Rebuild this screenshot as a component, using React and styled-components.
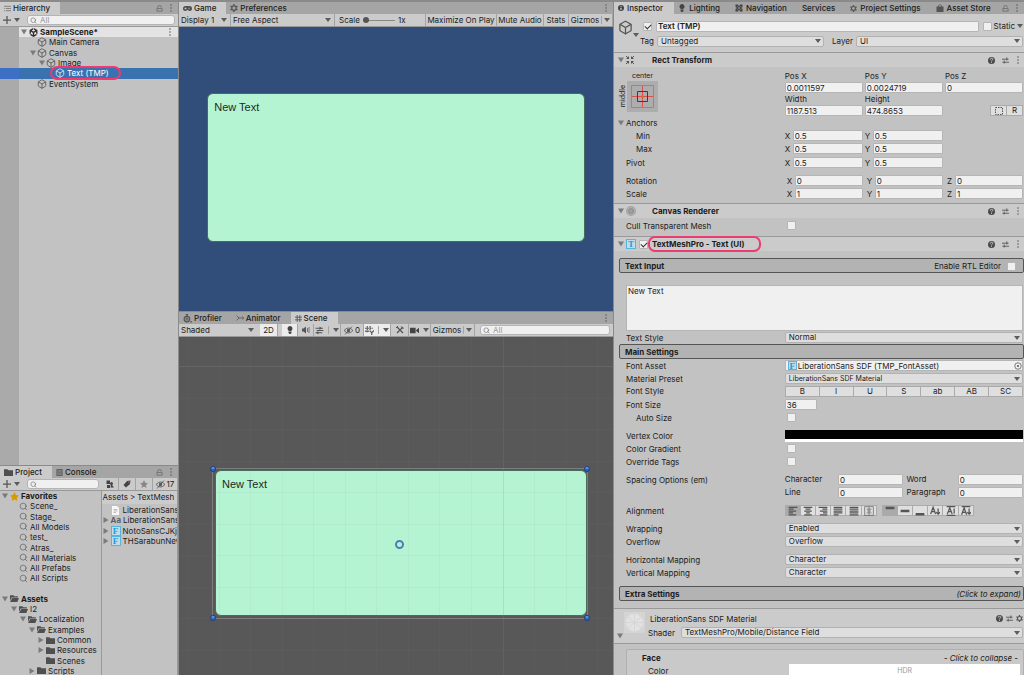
import React from 'react';
import styled, { createGlobalStyle, css } from 'styled-components';
import { Box, Search } from 'lucide-react';
import { FaUnity } from 'react-icons/fa6';

const GlobalStyle = createGlobalStyle`
  * {
    box-sizing: border-box;
  }
  body {
    margin: 0;
    overflow: hidden;
    background: #8a8a8a;
    color: #1c1c1c;
    font: 8px/10px Inter, "Liberation Sans", sans-serif;
  }
  button, input, select, textarea {
    margin: 0;
    padding: 0;
    border: 0;
    background: none;
    color: inherit;
    font: inherit;
  }
  svg {
    display: block;
    flex: none;
  }
`;

/* ---------- icons ---------- */

const Svg = ({ w = 8, h = w, box = '0 0 16 16', children }) => (
  <svg width={w} height={h} viewBox={box} fill="none" stroke="#555" strokeWidth="2" aria-hidden="true">
    {children}
  </svg>
);

const Down = () => (
  <Svg w={6} h={4} box="0 0 6 4"><path d="M0 0h6L3 4z" fill="#5c5c5c" stroke="none" /></Svg>
);
const Fold = ({ open }) => (
  <Svg w={6} box="0 0 12 12">
    <path d={open ? 'M0 1h12L6 11z' : 'M1 0v12l10-6z'} fill="#7b7b7b" stroke="none" />
  </Svg>
);
const Dots = () => (
  <Svg w={4} h={8} box="0 0 8 16">
    <g fill="#555" stroke="none">
      <circle cx="4" cy="2" r="1.500" />
      <circle cx="4" cy="8" r="1.500" />
      <circle cx="4" cy="14" r="1.500" />
    </g>
  </Svg>
);
const LockIcon = () => (
  <Svg w={7}><path d="M4 8V5a4 4 0 0 1 8 0v1M2 8h12v6H2z" stroke="#707070" /></Svg>
);
const Plus = () => <Svg w={8}><path d="M8 0v16M0 8h16" strokeWidth="2.500" /></Svg>;
const Cube = ({ size = 10, color = '#555' }) => <Box size={size} color={color} strokeWidth={2} />;
const Lens = ({ size = 9 }) => <Search size={size} color="#666" strokeWidth={2} />;
const ListIcon = () => (
  <Svg w={7}><path d="M0 3h16M4 8h12M4 13h12M1 7v2M1 12v2" stroke="#777" /></Svg>
);
const GamepadIcon = () => (
  <Svg w={9} h={7} box="0 0 18 14">
    <path d="M5 2h8a5 5 0 0 1 0 10q-2 0-3-2H8q-1 2-3 2A5 5 0 0 1 5 2z" fill="#505050" stroke="none" />
    <path d="M5 5v4M3 7h4M12 5.500v3" stroke="#cbcbcb" strokeWidth="1.500" />
  </Svg>
);
const Gear = ({ size = 8 }) => (
  <Svg w={size}>
    <circle cx="8" cy="8" r="4.500" strokeWidth="2.500" />
    <path d="M8 0v3M8 13v3M1 4l3 2M12 10l3 2M1 12l3-2M12 6l3-2" strokeWidth="3" />
  </Svg>
);
const InfoIcon = () => (
  <Svg w={6}>
    <circle cx="8" cy="8" r="8" fill="#444" stroke="none" />
    <path d="M8 7v6M8 3v2" stroke="#ddd" strokeWidth="3" />
  </Svg>
);
const Bulb = () => (
  <Svg w={8}>
    <path d="M8 0a5 5 0 0 1 3 9v2H5V9a5 5 0 0 1 3-9zM5 12h6v2l-2 2H7l-2-2z" fill="#444" stroke="none" />
  </Svg>
);
const NavIcon = () => (
  <Svg w={8}>
    <path d="M1 1h5l2 4 2-4h5v5l-3 2 3 2v5h-5l-2-4-2 4H1v-5l3-2-3-2z" fill="#444" stroke="none" />
    <path d="M4 4l8 8M12 4l-8 8" stroke="#a5a5a5" strokeWidth="1" />
  </Svg>
);
const BagIcon = () => (
  <Svg w={8}>
    <path d="M1 5h14v11H1z" fill="#555" stroke="none" />
    <path d="M5 7V3q3-3 6 0v4" strokeWidth="1.500" />
  </Svg>
);
const ProfilerIcon = () => (
  <Svg w={9}>
    <circle cx="7" cy="9" r="5" fill="#888" />
    <path d="M5 1h4M7 1v3M7 6v4M13 14h3" />
  </Svg>
);
const AnimatorIcon = () => (
  <Svg w={8}><path d="M1 3l5 5-5 5M6 8h10M13 5l2 3-2 3" stroke="#666" /></Svg>
);
const HashIcon = () => (
  <Svg w={7}><path d="M5 0v16M11 0v16M0 5h16M0 11h16" /></Svg>
);
const Speaker = () => (
  <Svg w={8}>
    <path d="M0 5h3l5-4v14l-5-4H0z" fill="#555" stroke="none" />
    <path d="M11 4v8M14 2v12" stroke="#777" />
  </Svg>
);
const FxIcon = () => (
  <Svg w={9}>
    <path d="M1 4h13M3 8h12M1 12h12" />
    <path d="M8 1l4 3-4 3zM6 9l-4 3 4 3z" fill="#555" stroke="none" />
  </Svg>
);
const EyeOff = () => (
  <Svg w={9}><path d="M0 8q8-9 16 0-8 9-16 0zM2 15L14 1" strokeWidth="1.500" /><circle cx="8" cy="8" r="2" /></Svg>
);
const GridSnap = () => (
  <Svg w={9}>
    <path d="M4 0v12M9 0v9M0 4h14M0 9h9" strokeDasharray="3 1" />
    <path d="M9 9l3 3 4-4M12 12v4" />
  </Svg>
);
const ToolsIcon = () => (
  <Svg w={8}><path d="M2 2l12 12M14 2L2 14" strokeWidth="2.500" /><path d="M0 4l4-4M10 1l5 5" /></Svg>
);
const CameraIcon = () => (
  <Svg w={9}><path d="M0 3h10v10H0zM11 7l5-4v10l-5-4z" fill="#444" stroke="none" /></Svg>
);
const FolderIcon = ({ open }) => (
  <Svg w={9}>
    <path
      d={open ? 'M0 2h6l2 2h6v2H3L0 12zM4 7h12l-3 7H0z' : 'M0 2h6l2 2h8v10H0z'}
      fill="#4f4f4f"
      stroke="none"
    />
  </Svg>
);
const StarIcon = ({ size = 9, color = '#d69a00' }) => (
  <Svg w={size}>
    <path d="M8 0l2.500 5.500 5.500.5-4 4 1 6-5-3-5 3 1-6-4-4 5.500-.5z" fill={color} stroke="none" />
  </Svg>
);
const ConsoleIcon = () => (
  <Svg w={7}><path d="M2 1h12v14H2z" fill="#888" /><path d="M4 5h8M4 8h8M4 11h8" strokeWidth="1" /></Svg>
);
const ShapesIcon = () => (
  <Svg w={8}>
    <path d="M1 1h7v7H1zM2 10h6v6H2zM10 7l6 8H9z" fill="#444" stroke="none" />
    <circle cx="11" cy="7" r="3" fill="#444" stroke="none" />
  </Svg>
);
const TagIcon = () => (
  <Svg w={8}><path d="M8 2l7-1-1 7-8 7-5-5z" fill="#444" stroke="none" /><circle cx="12" cy="4" r="1" fill="#ccc" stroke="none" /></Svg>
);
const PageIcon = () => (
  <Svg w={9} box="0 0 18 18">
    <path d="M2 0h10l4 4v14H2z" fill="#f8f8f8" stroke="none" />
    <path d="M5 7h8M5 10h8M5 13h5" stroke="#aaa" strokeWidth="1.500" />
  </Svg>
);
const HelpIcon = () => (
  <Svg w={7}>
    <circle cx="8" cy="8" r="8" fill="#4a4a4a" stroke="none" />
    <path d="M5 6q0-3 3-3t3 2.500Q11 7 8 8.500V10M8 11.500v2" stroke="#d0d0d0" />
  </Svg>
);
const PresetIcon = () => (
  <Svg w={7}><path d="M0 5h15M11 1v7M1 12h15M5 8v7" /></Svg>
);
const RectIcon = () => (
  <Svg w={8}>
    <path d="M0 0l5 5M16 0l-5 5M0 16l5-5M16 16l-5-5" />
    <path d="M0 6h6V0zM16 6h-6V0zM0 10h6v6zM16 10h-6v6z" fill="#555" stroke="none" />
  </Svg>
);
const RendererIcon = () => (
  <Svg w={10}>
    <circle cx="8" cy="8" r="7" fill="#b4b4b4" stroke="#a4a4a4" />
    <circle cx="8" cy="8" r="3.500" stroke="#8a8a8a" />
    <circle cx="8" cy="8" r="1" fill="#777" stroke="none" />
  </Svg>
);
const AnchorDrawing = () => (
  <Svg w={31} box="0 0 31 31">
    <path d="M0 0h31v31H0z" fill="#adadad" stroke="none" />
    <path d="M4.500 4.500h22v22h-22z" stroke="#8c8c8c" strokeWidth="1" />
    <path d="M15.500 5v21M5 15.500h21" stroke="#d95050" strokeWidth="1" />
    <path d="M10.500 10.500h10v10h-10z" stroke="#3c3c3c" strokeWidth="1" />
    <circle cx="15.500" cy="15.500" r="1.500" fill="#c07818" stroke="none" />
  </Svg>
);
const DottedBox = () => (
  <Svg w={8}><path d="M1 1h14v14H1z" strokeDasharray="3 2" /></Svg>
);
const PickerIcon = () => (
  <Svg w={8}><circle cx="8" cy="8" r="6.500" strokeWidth="1.500" /><circle cx="8" cy="8" r="2" fill="#555" stroke="none" /></Svg>
);
const SphereIcon = () => (
  <Svg w={21} box="0 0 21 21">
    <path d="M0 0h21v21H0z" fill="#d4d4d4" stroke="none" />
    <circle cx="10.500" cy="10.500" r="9" fill="#e2e2e2" stroke="#dadada" strokeWidth="1" />
    <path d="M4 5l13 11M4 16L17 5M10.500 1v19M1 10.500h19" stroke="#d6d6d6" strokeWidth="1" />
  </Svg>
);

const ALIGN_PATHS = {
  left: 'M1 2h14M1 5h8M1 8h12M1 11h7M1 14h12',
  center: 'M1 2h14M4 5h8M2 8h12M5 11h6M2 14h12',
  right: 'M1 2h14M7 5h8M3 8h12M8 11h7M3 14h12',
  justified: 'M1 2h14M1 5h14M1 8h14M1 11h14M1 14h8',
  flush: 'M1 2h14M1 5h14M1 8h14M1 11h14M1 14h14',
  geometry: 'M1 1h14v14H1zM8 1v14M4 5h8M5 8h6M4 11h8',
  top: 'M1 2h14M1 4h14',
  middle: 'M1 7h14M1 9h14',
  bottom: 'M1 12h14M1 14h14',
  baseline: 'M1 13L5 2l4 11M3 9h5M13 4v9M10 10l3 3 3-3',
  midline: 'M1 1h14M2 13L6 3l4 10M3 9h6M13 4v8M1 15h14',
  capline: 'M1 1h14M1 14L5 3l4 11M3 10h5M13 4v9M10 10l3 3 3-3',
};
const AlignIcon = ({ name }) => (
  <Svg w={10}><path d={ALIGN_PATHS[name]} strokeWidth={name === 'geometry' ? 1 : 2} /></Svg>
);

/* ---------- shared parts ---------- */

const Shell = styled.div`
  display: grid;
  grid-template-columns: 178fr 434fr 410fr;
  gap: 1px;
  height: 100vh;
  padding-top: 2px;
`;
const Column = styled.div`
  display: grid;
  grid-template-rows: ${props => props.$rows};
  gap: 1px;
  min-width: 0;
  min-height: 0;
`;
const Panel = styled.section`
  display: flex;
  flex-direction: column;
  min-width: 0;
  min-height: 0;
  overflow: hidden;
  background: #c2c2c2;
`;
const TabBar = styled.div`
  display: flex;
  flex: none;
  height: 12px;
  padding-right: 5px;
  background: #a5a5a5;
`;
const Tab = styled.button`
  display: flex;
  align-items: center;
  gap: ${props => (props.$roomy ? 3 : 2)}px;
  padding: 0 ${props => (props.$roomy ? 11 : 10)}px 0 4px;
  white-space: nowrap;
  font-weight: 500;
  background: ${props => (props.$active ? '#cbcbcb' : 'transparent')};
  box-shadow: ${props => (props.$focused ? '0 -2px 0 #4a80c4' : 'none')};
`;
const TabTools = styled.div`
  display: flex;
  align-items: center;
  gap: 6px;
  margin-left: auto;
`;
const Toolbar = styled.div`
  display: flex;
  align-items: center;
  flex: none;
  height: 13px;
  background: #cbcbcb;
  border-bottom: 1px solid #999;
`;
const ToolItem = styled.button`
  display: flex;
  align-items: center;
  justify-content: ${props => (props.$spread ? 'space-between' : 'center')};
  gap: 2px;
  flex: ${props => (props.$width ? `0 0 ${props.$width}px` : 'none')};
  height: 12px;
  padding: 0 1px;
  white-space: nowrap;
  border-right: 1px solid #a3a3a3;
  background: ${props => (props.$on ? '#ececec' : 'transparent')};
`;
const LoneItem = styled(ToolItem)`
  margin: 0 4px 0 3px;
`;
const Split = styled.span`
  width: 1px;
  height: 8px;
  background: #a3a3a3;
`;
const AddButton = styled.button`
  display: flex;
  align-items: center;
  gap: 3px;
  width: 27px;
  padding-left: 3px;
`;
const SearchBox = styled.label`
  display: flex;
  align-items: center;
  flex: 1;
  gap: 3px;
  min-width: 0;
  height: 10px;
  margin-right: 3px;
  padding-left: 2px;
  border: 1px solid #b4b4b4;
  border-radius: 3px;
  background: #f0f0f0;

  input {
    width: 100%;
    min-width: 0;
    height: 8px;
    line-height: 8px;
    outline: 0;
  }
  input::placeholder {
    color: #9a9a9a;
  }
`;
const Marker = styled.span`
  position: absolute;
  inset: ${props => props.$inset};
  border: 2px solid #ee3a70;
  border-radius: 7px;
  pointer-events: none;
`;

const Filter = ({ label, placeholder }) => (
  <SearchBox>
    <Lens size={7} />
    <input aria-label={label} placeholder={placeholder} />
  </SearchBox>
);

const Tabs = ({ items, lock, roomy }) => (
  <TabBar role="tablist">
    {items.map(({ label, icon, active, focused }) => (
      <Tab key={label} role="tab" aria-selected={!!active} $active={active} $focused={focused} $roomy={roomy}>
        {icon}
        {label}
      </Tab>
    ))}
    <TabTools>
      {lock && <LockIcon />}
      <Dots />
    </TabTools>
  </TabBar>
);

/* ---------- trees ---------- */

const Tree = styled.ul`
  display: grid;
  grid-auto-rows: 1fr;
  flex: none;
  height: ${props => props.$height}px;
  margin: 0;
  padding: 0;
  list-style: none;
`;
const TreeItem = styled.li`
  position: relative;
  display: flex;
  align-items: center;
  min-width: 0;
  padding-left: ${props => props.$depth * 9}px;
  white-space: nowrap;
  font-weight: ${props => (props.$bold ? 700 : 400)};
`;
const FoldSlot = styled.span`
  display: flex;
  justify-content: center;
  flex: 0 0 9px;
`;
const IconSlot = styled.span`
  display: flex;
  justify-content: center;
  flex: 0 0 10px;
  margin-right: 2px;
`;
const AssetBadge = styled.span`
  flex: none;
  width: ${props => props.$size || 10}px;
  height: ${props => props.$size || 10}px;
  border: 1px solid #58b4dc;
  background: #c4dce8;
  color: #1c9cd8;
  font: bold 9px/8px "Liberation Serif", serif;
  text-align: center;
`;
const FontMark = styled.span`
  color: #555;
  font-weight: 600;
`;

const Node = ({ depth = 0, fold, icon, label, bold, children }) => (
  <TreeItem $depth={depth} $bold={bold}>
    <FoldSlot>{fold && <Fold open={fold === 'open'} />}</FoldSlot>
    <IconSlot>{icon}</IconSlot>
    {label}
    {children}
  </TreeItem>
);

const HierarchyBody = styled.div`
  flex: 1;
  background: linear-gradient(to right, #aaa 19px, #c2c2c2 19px);
`;
const HierarchyRow = styled.div`
  display: flex;
  align-items: center;
  color: ${props => (props.$selected ? '#fff' : 'inherit')};
  background: ${props => {
    if (props.$selected) return 'linear-gradient(to right, #3d70c4 19px, #3a72b0 19px)';
    if (props.$scene) return 'linear-gradient(to right, #aaa 19px, #e3e3e3 19px)';
    return 'none';
  }};

  > ${TreeItem} {
    flex: 1;
    margin-left: 19px;
    padding-right: 6px;
  }
`;
const Push = styled.span`
  margin-left: auto;
`;

const HIERARCHY = [
  { label: 'SampleScene*', depth: 0, fold: 'open', scene: true },
  { label: 'Main Camera', depth: 1 },
  { label: 'Canvas', depth: 1, fold: 'open' },
  { label: 'Image', depth: 2, fold: 'open' },
  { label: 'Text (TMP)', depth: 3, selected: true },
  { label: 'EventSystem', depth: 1 },
];

const Hierarchy = () => (
  <Panel>
    <Tabs items={[{ label: 'Hierarchy', icon: <ListIcon />, active: true, focused: true }]} lock />
    <Toolbar>
      <AddButton aria-label="Create"><Plus /><Down /></AddButton>
      <Filter label="Search hierarchy" placeholder="All" />
    </Toolbar>
    <HierarchyBody>
      <Tree as="div" $height={62}>
        {HIERARCHY.map(({ label, depth, fold, scene, selected }) => (
          <HierarchyRow key={label} $scene={scene} $selected={selected}>
            <TreeItem as="div" $depth={depth} $bold={scene}>
              <FoldSlot>{fold && <Fold open />}</FoldSlot>
              <IconSlot>
                {scene ? <FaUnity size={9} color="#333" /> : <Cube color={selected ? '#dfe8f2' : '#555'} />}
              </IconSlot>
              {label}
              {scene && <Push><Dots /></Push>}
              {selected && <Marker $inset="-2px 57px -2px 31px" />}
            </TreeItem>
          </HierarchyRow>
        ))}
      </Tree>
    </HierarchyBody>
  </Panel>
);

/* ---------- project ---------- */

const ProjectBody = styled.div`
  display: grid;
  grid-template-columns: 101fr 76fr;
  flex: 1;
  min-height: 0;
`;
const ProjectPane = styled.div`
  min-width: 0;
  overflow: hidden;
  border-right: 1px solid #999;
`;
const Breadcrumb = styled.nav`
  display: flex;
  gap: 2px;
  height: 13px;
  margin-bottom: 1px;
  padding: 0 1px;
  line-height: 13px;
  background: #cbcbcb;
`;

const FAVORITES = ['Scene_', 'Stage_', 'All Models', 'test_', 'Atras_', 'All Materials', 'All Prefabs', 'All Scripts'];
const FOLDERS = [
  { label: 'Assets', depth: 0, fold: 'open', bold: true },
  { label: 'I2', depth: 1, fold: 'open' },
  { label: 'Localization', depth: 2, fold: 'open' },
  { label: 'Examples', depth: 3, fold: 'open' },
  { label: 'Common', depth: 4, fold: 'closed' },
  { label: 'Resources', depth: 4, fold: 'closed' },
  { label: 'Scenes', depth: 4 },
  { label: 'Scripts', depth: 3, fold: 'closed' },
];

const Project = () => (
  <Panel>
    <Tabs
      items={[
        { label: 'Project', icon: <FolderIcon />, active: true },
        { label: 'Console', icon: <ConsoleIcon /> },
      ]}
      lock
    />
    <Toolbar>
      <AddButton aria-label="Create asset"><Plus /><Down /></AddButton>
      <Filter label="Search project" />
      <ToolItem $width={17} aria-label="Search by type"><ShapesIcon /></ToolItem>
      <ToolItem $width={17} aria-label="Search by label"><TagIcon /></ToolItem>
      <ToolItem $width={17} aria-label="Save search"><StarIcon size={8} color="#888" /></ToolItem>
      <ToolItem $width={25}><EyeOff />17</ToolItem>
    </Toolbar>
    <ProjectBody>
      <ProjectPane>
        <Tree $height={185}>
          <Node fold="open" icon={<StarIcon />} label="Favorites" bold />
          {FAVORITES.map(name => (
            <Node key={name} depth={1} icon={<Lens />} label={name} />
          ))}
          <Node />
          {FOLDERS.map(({ label, depth, fold, bold }) => (
            <Node
              key={label}
              depth={depth}
              fold={fold}
              bold={bold}
              label={label}
              icon={<FolderIcon open={fold === 'open'} />}
            />
          ))}
        </Tree>
      </ProjectPane>
      <ProjectPane>
        <Breadcrumb><span>Assets</span><span>&gt;</span><span>TextMesh</span></Breadcrumb>
        <Tree $height={41}>
          <Node icon={<PageIcon />} label="LiberationSans" />
          <Node fold="closed" icon={<FontMark>Aa</FontMark>} label="LiberationSans" />
          <Node fold="closed" icon={<AssetBadge>F</AssetBadge>} label="NotoSansCJKjp" />
          <Node fold="closed" icon={<AssetBadge>F</AssetBadge>} label="THSarabunNew" />
        </Tree>
      </ProjectPane>
    </ProjectBody>
  </Panel>
);

/* ---------- form controls ---------- */

const SelectWrap = styled.span`
  display: grid;
  align-items: center;
  flex: ${props => props.$flex || 1};
  min-width: 0;

  > * {
    grid-area: 1 / 1;
  }
  > svg {
    justify-self: end;
    margin-right: 3px;
    pointer-events: none;
  }
`;
const SelectBox = styled.select`
  width: 100%;
  height: 11px;
  padding-left: ${props => (props.$bare ? 2 : 3)}px;
  appearance: none;
  line-height: 9px;
  font-size: ${props => (props.$small ? 7 : 8)}px;
  ${props =>
    !props.$bare &&
    css`
      border: 1px solid #b2b2b2;
      border-radius: 2px;
      background: #dedede;
    `}
`;
const TextField = styled.input`
  flex: 1;
  width: 100%;
  min-width: 0;
  height: 11px;
  padding-left: 1px;
  border: 1px solid #b5b5b5;
  border-radius: 1px;
  background: #f0f0f0;
  line-height: 9px;
  font-weight: ${props => (props.$bold ? 600 : 400)};
`;
const Check = styled.input.attrs({ type: 'checkbox' })`
  display: grid;
  place-items: center;
  flex: none;
  width: 9px;
  height: 9px;
  appearance: none;
  border: 1px solid #b5b5b5;
  border-radius: 1px;
  background: #f0f0f0;

  &:checked::after {
    content: '';
    width: 5px;
    height: 3px;
    border: solid #333;
    border-width: 0 0 1px 1px;
    transform: rotate(-45deg);
  }
`;

const Select = ({ value, id, label, flex, bare, small }) => (
  <SelectWrap $flex={flex}>
    <SelectBox id={id} aria-label={label} $bare={bare} $small={small}>
      <option>{value}</option>
    </SelectBox>
    <Down />
  </SelectWrap>
);

/* ---------- game view ---------- */

const GameTools = styled(Toolbar)`
  > ${SelectWrap} {
    height: 12px;
    border-right: 1px solid #a3a3a3;
  }
`;
const Zoom = styled.label`
  display: flex;
  align-items: center;
  gap: 3px;
  flex: 1;
  height: 12px;
  padding-left: 4px;
  border-right: 1px solid #a3a3a3;

  input {
    width: 32px;
    height: 1px;
    appearance: none;
    background: #888;
  }
  input::-webkit-slider-thumb {
    width: 6px;
    height: 6px;
    appearance: none;
    border-radius: 50%;
    background: #555;
  }
`;
const GameCanvas = styled.div`
  display: flex;
  align-items: center;
  justify-content: center;
  flex: 1;
  min-height: 0;
  padding-bottom: 3px;
  background: #314d79;
`;
const card = css`
  border: 1px solid #486b5c;
  border-radius: 6px;
  background: #b5f4d3;
  color: #1b2b23;
  font: 11px/13px "Liberation Sans", Arial, sans-serif;
`;
const GameCard = styled.div`
  ${card}
  width: 87%;
  aspect-ratio: 378 / 149;
  padding: 7px 6px;
`;

const Game = () => (
  <Panel>
    <Tabs
      items={[
        { label: 'Game', icon: <GamepadIcon />, active: true },
        { label: 'Preferences', icon: <Gear /> },
      ]}
    />
    <GameTools>
      <Select label="Display" value="Display 1" bare flex="0 0 52px" />
      <Select label="Aspect" value="Free Aspect" bare flex="0 0 104px" />
      <Zoom>
        Scale
        <input type="range" min="1" max="5" defaultValue="1" />
        1x
      </Zoom>
      <ToolItem $width={71}>Maximize On Play</ToolItem>
      <ToolItem $width={47}>Mute Audio</ToolItem>
      <ToolItem $width={25}>Stats</ToolItem>
      <ToolItem $width={44}>Gizmos<Split /><Down /></ToolItem>
    </GameTools>
    <GameCanvas>
      <GameCard>New Text</GameCard>
    </GameCanvas>
  </Panel>
);

/* ---------- scene view ---------- */

const SceneTools = styled(Toolbar)`
  > ${SearchBox} {
    margin-left: 5px;
  }
`;
const SceneCanvas = styled.div`
  position: relative;
  flex: 1;
  min-height: 0;
  overflow: hidden;
  padding: 131px 25px 0 33px;
  background: #585858;
`;
const GridLines = styled.svg`
  position: absolute;
  inset: 0;
  width: 100%;
  height: 100%;
  pointer-events: none;
`;
const Selection = styled.div`
  position: relative;
  height: 151px;
  padding: 1px 0 2px 2px;
  border: 1px solid #7d7d7d;
`;
const SceneCard = styled.div`
  ${card}
  height: 100%;
  padding: 7px 6px;
`;
const Handle = styled.span`
  position: absolute;
  ${props => props.$v}: -3px;
  ${props => props.$h}: -3px;
  width: 6px;
  height: 6px;
  border: 1px solid #1c3f80;
  border-radius: 50%;
  background: linear-gradient(#86b8f4, #2268dc 60%);
`;
const Pivot = styled.span`
  position: absolute;
  top: 50%;
  left: 50%;
  width: 9px;
  height: 9px;
  margin: -4px -5px;
  border: 2px solid #4680b4;
  border-radius: 50%;
  background: #c4ecdc;
`;

const SceneGrid = () => (
  <GridLines aria-hidden="true">
    {Array.from({ length: 30 }, (_, i) => (
      <React.Fragment key={i}>
        <path d={`M${8.5 + Math.round(i * 31.55)} 0v2000`} stroke="#888" strokeOpacity={i === 10 ? 0.2 : 0.07} />
        <path d={`M0 ${29.5 + Math.round(i * 31.55)}h2000`} stroke="#888" strokeOpacity={i === 0 ? 0.28 : 0.07} />
      </React.Fragment>
    ))}
  </GridLines>
);

const Scene = () => (
  <Panel>
    <Tabs
      items={[
        { label: 'Profiler', icon: <ProfilerIcon /> },
        { label: 'Animator', icon: <AnimatorIcon /> },
        { label: 'Scene', icon: <HashIcon />, active: true },
      ]}
    />
    <SceneTools>
      <Select label="Shading mode" value="Shaded" bare flex="0 0 78px" />
      <LoneItem $width={18} $on>2D</LoneItem>
      <ToolItem $width={16} $on aria-label="Lighting"><Bulb /></ToolItem>
      <ToolItem $width={16} aria-label="Audio"><Speaker /></ToolItem>
      <ToolItem $width={27} $spread aria-label="Effects"><FxIcon /><Split /><Down /></ToolItem>
      <ToolItem $width={23}><EyeOff />0</ToolItem>
      <ToolItem $width={27} $spread $on aria-label="Grid"><GridSnap /><Split /><Down /></ToolItem>
      <ToolItem $width={18} aria-label="Component tools"><ToolsIcon /></ToolItem>
      <ToolItem $width={22} $spread aria-label="Camera"><CameraIcon /><Down /></ToolItem>
      <ToolItem $width={44}>Gizmos<Split /><Down /></ToolItem>
      <Filter label="Search scene" placeholder="All" />
    </SceneTools>
    <SceneCanvas>
      <Selection>
        <SceneCard>New Text</SceneCard>
        <Handle $v="top" $h="left" />
        <Handle $v="top" $h="right" />
        <Handle $v="bottom" $h="left" />
        <Handle $v="bottom" $h="right" />
        <Pivot />
      </Selection>
      <SceneGrid />
    </SceneCanvas>
  </Panel>
);

/* ---------- inspector ---------- */

const ObjectHeader = styled.header`
  display: grid;
  grid-template-columns: 22px 1fr;
  flex: none;
  height: 38px;
  padding: 6px 1px 0 4px;
  background: #cbcbcb;
`;
const ObjectIcon = styled.span`
  display: flex;
  align-items: flex-end;
  height: 17px;

  > svg:first-child {
    align-self: flex-start;
  }
`;
const ObjectRow = styled.div`
  display: flex;
  align-items: center;
  gap: ${props => props.$gap || 3}px;
  height: 12px;
  margin-bottom: 3px;
  padding-left: ${props => props.$indent || 0}px;
`;
const StaticToggle = styled.span`
  display: flex;
  align-items: center;
  gap: 2px;
`;
const Gap = styled.span`
  width: 2px;
`;
const SectionHeader = styled.header`
  display: flex;
  align-items: center;
  flex: none;
  height: 15px;
  padding: 0 4px;
  border-top: 1px solid #999;
  background: #cbcbcb;
`;
const SectionIcon = styled.span`
  display: flex;
  align-items: center;
  gap: 3px;
  width: 26px;
  margin-left: 2px;
`;
const SectionTitle = styled.h2`
  position: relative;
  margin: 0;
  font-size: 8px;
  font-weight: 700;
`;
const HeaderTools = styled.span`
  display: flex;
  align-items: center;
  gap: ${props => props.$gap || 7}px;
  margin-left: auto;
`;
const SectionBody = styled.div`
  flex: none;
  padding: ${props => props.$pad};
`;
const Row = styled.div`
  display: grid;
  grid-template-columns: 2fr 3fr;
  align-items: center;
  height: ${props => props.$h || 13}px;
  margin-top: ${props => props.$gap || 0}px;
  padding: 0 1px 0 12px;
`;
const Label = styled.label`
  padding-left: ${props => (props.$indent ? 10 : 0)}px;
  white-space: nowrap;
`;
const Cells = styled.div`
  display: grid;
  grid-template-columns: repeat(3, 1fr);
  gap: 2px;
`;
const Cell = styled.label`
  display: flex;
  align-items: center;
  min-width: 0;
  padding-left: ${props => (props.$wide ? 2 : 0)}px;
`;
const Axis = styled.span`
  flex: 0 0 8px;
`;
const AnchorGrid = styled.div`
  display: grid;
  grid-template-columns: 9px 31px;
  grid-template-rows: 11px 31px;
  width: 40px;
  height: 0;
  margin-left: 4px;
  font-size: 7px;
`;
const AnchorTop = styled.span`
  grid-column: 2;
  place-self: end center;
`;
const AnchorSide = styled.span`
  grid-area: 2 / 1;
  place-self: center;
  writing-mode: vertical-rl;
  rotate: 180deg;
  line-height: 9px;
`;
const AnchorButton = styled.button`
  grid-area: 2 / 2;
`;
const Pair = styled.div`
  display: flex;
  justify-content: flex-end;
`;
const SmallButton = styled.button`
  display: grid;
  place-items: center;
  flex: ${props => (props.$width ? `0 0 ${props.$width}px` : 1)};
  height: 11px;
  border: 1px solid #ababab;
  border-left-width: ${props => (props.$joined ? 0 : 1)}px;
  background: ${props => (props.$on ? '#aaa' : '#dfdfdf')};
  line-height: 9px;
`;
const BarTitle = styled.div`
  display: flex;
  align-items: center;
  justify-content: space-between;
  height: 15px;
  margin: ${props => props.$margin || 0};
  padding: 1px 2px 0 5px;
  border: 1px solid #555;
  border-radius: 2px;
  background: #b3b3b3;
`;
const RtlToggle = styled.label`
  display: flex;
  align-items: center;
  gap: 6px;
  padding-right: 5px;
`;
const TextArea = styled.textarea`
  display: block;
  width: calc(100% - 13px);
  height: 46px;
  margin: 12px 0 0 12px;
  padding: 0 1px;
  resize: none;
  border: 1px solid #b5b5b5;
  background: #f0f0f0;
`;
const ButtonRow = styled.div`
  display: flex;
  width: ${props => (props.$width ? `${props.$width}px` : '100%')};
`;
const AlignGroups = styled.div`
  display: flex;
  gap: 5px;
`;
const ObjectField = styled.div`
  display: flex;
  align-items: center;
  gap: 1px;
  height: 11px;
  padding-left: 2px;
  border: 1px solid #b5b5b5;
  background: #f0f0f0;
  white-space: nowrap;

  button {
    margin-left: auto;
  }
`;
const ColorField = styled.button`
  height: 12px;
  border-bottom: 3px solid #fff;
  background: #000;
`;
const SpacingGrid = styled.div`
  display: grid;
  grid-template-columns: 52fr 65fr 52fr 65fr;
  gap: 1px;
`;
const Spaced = styled.label`
  padding-left: ${props => (props.$inset ? 2 : 0)}px;
`;
const NarrowField = styled(TextField)`
  width: 32px;
`;
const MaterialHeader = styled.header`
  display: grid;
  grid-template-columns: 29px 1fr;
  flex: none;
  height: 36px;
  margin-top: 7px;
  padding: 3px 1px 0 3px;
  border: solid #999;
  border-width: 1px 0;
  background: #cbcbcb;
`;
const MaterialPreview = styled.span`
  display: flex;
  flex-direction: column;
  padding-left: 7px;

  > svg:last-child {
    margin-left: -7px;
  }
`;
const MaterialRow = styled.div`
  display: flex;
  align-items: center;
  gap: 6px;
  height: ${props => (props.$title ? 13 : 15)}px;
  padding-left: ${props => (props.$title ? 4 : 2)}px;
`;
const FaceBox = styled.div`
  flex: none;
  margin: 5px 0 0 12px;
  padding: 1px 3px 0 15px;
  border: 1px solid #b0b0b0;
  border-radius: 2px;
  background: #c9c9c9;
`;
const FaceRow = styled.div`
  display: flex;
  align-items: center;
  justify-content: space-between;
  height: 13px;
  padding-right: 2px;
`;
const FaceColor = styled.div`
  display: grid;
  grid-template-columns: 38% 62%;
  align-items: center;
  height: 13px;
  padding-left: 6px;
`;
const HdrButton = styled.button`
  height: 13px;
  background: #fff;
  color: #999;
  font-size: 7px;
`;

const Section = ({ icon, title, checked, marked }) => (
  <SectionHeader>
    <Fold open />
    <SectionIcon>
      {icon}
      {checked && <Check aria-label={`${title} enabled`} defaultChecked />}
    </SectionIcon>
    <SectionTitle>
      {title}
      {marked && <Marker $inset="-3px -17px -3px -4px" />}
    </SectionTitle>
    <HeaderTools><HelpIcon /><PresetIcon /><Dots /></HeaderTools>
  </SectionHeader>
);

const Vector = ({ label, indent, gap, values, wide }) => (
  <Row $gap={gap}>
    <Label as="span" $indent={indent}>{label}</Label>
    <Cells>
      {values.map((value, i) => (
        <Cell key={'XYZ'[i]} $wide={wide}>
          <Axis>{'XYZ'[i]}</Axis>
          <TextField aria-label={`${label} ${'XYZ'[i]}`} defaultValue={value} />
        </Cell>
      ))}
    </Cells>
  </Row>
);

const Choice = ({ label, value, gap, small }) => (
  <Row $gap={gap}>
    <Label htmlFor={label}>{label}</Label>
    <Select id={label} value={value} small={small} />
  </Row>
);

const CheckCell = styled.span`
  padding-left: 2px;
`;

const Toggle = ({ label, indent }) => (
  <Row>
    <Label htmlFor={label} $indent={indent}>{label}</Label>
    <CheckCell><Check id={label} /></CheckCell>
  </Row>
);

const AlignGroup = ({ names }) => (
  <ButtonRow $width={92}>
    {names.map((name, i) => (
      <SmallButton key={name} aria-label={`Align ${name}`} $joined={i > 0} $on={i === 0}>
        <AlignIcon name={name} />
      </SmallButton>
    ))}
  </ButtonRow>
);

const AnchorsFold = styled.div`
  display: flex;
  align-items: center;
  gap: 2px;
  height: 12px;
  margin-top: 1px;
  padding-left: 4px;
`;

const RectTransform = () => (
  <SectionBody $pad="3px 0">
    <AnchorGrid>
      <AnchorTop>center</AnchorTop>
      <AnchorSide>middle</AnchorSide>
      <AnchorButton aria-label="Anchor presets"><AnchorDrawing /></AnchorButton>
    </AnchorGrid>
    <Row $h={12}>
      <span />
      <Cells>
        <label htmlFor="posx">Pos X</label>
        <label htmlFor="posy">Pos Y</label>
        <label htmlFor="posz">Pos Z</label>
      </Cells>
    </Row>
    <Row $h={11}>
      <span />
      <Cells>
        <TextField id="posx" defaultValue="0.0011597" />
        <TextField id="posy" defaultValue="0.0024719" />
        <TextField id="posz" defaultValue="0" />
      </Cells>
    </Row>
    <Row $h={12}>
      <span />
      <Cells>
        <label htmlFor="width">Width</label>
        <label htmlFor="height">Height</label>
      </Cells>
    </Row>
    <Row $h={11}>
      <span />
      <Cells>
        <TextField id="width" defaultValue="1187.513" />
        <TextField id="height" defaultValue="474.8653" />
        <Pair>
          <SmallButton $width={17} aria-label="Blueprint mode"><DottedBox /></SmallButton>
          <SmallButton $width={16} $joined>R</SmallButton>
        </Pair>
      </Cells>
    </Row>
    <AnchorsFold>
      <Fold open />
      Anchors
    </AnchorsFold>
    <Vector label="Min" indent values={['0.5', '0.5']} />
    <Vector label="Max" indent values={['0.5', '0.5']} />
    <Vector label="Pivot" gap={1} values={['0.5', '0.5']} />
    <Vector label="Rotation" gap={5} values={['0', '0', '0']} wide />
    <Vector label="Scale" values={['1', '1', '1']} wide />
  </SectionBody>
);

const TextMeshPro = () => (
  <SectionBody $pad="7px 0 0">
    <BarTitle $margin="0 0 0 5px">
      <strong>Text Input</strong>
      <RtlToggle>Enable RTL Editor<Check /></RtlToggle>
    </BarTitle>
    <TextArea aria-label="Text Input" defaultValue="New Text" />
    <Choice label="Text Style" value="Normal" />
    <BarTitle $margin="0 0 0 5px"><strong>Main Settings</strong></BarTitle>
    <Row>
      <Label as="span">Font Asset</Label>
      <ObjectField>
        <AssetBadge $size={9}>F</AssetBadge>
        LiberationSans SDF (TMP_FontAsset)
        <button aria-label="Pick font asset"><PickerIcon /></button>
      </ObjectField>
    </Row>
    <Choice label="Material Preset" value="LiberationSans SDF Material" small />
    <Row $h={12}>
      <Label as="span">Font Style</Label>
      <ButtonRow>
        {['B', 'I', 'U', 'S', 'ab', 'AB', 'SC'].map((name, i) => (
          <SmallButton key={name} $joined={i > 0}>{name}</SmallButton>
        ))}
      </ButtonRow>
    </Row>
    <Row $gap={1}>
      <Label htmlFor="fontsize">Font Size</Label>
      <NarrowField id="fontsize" defaultValue="36" />
    </Row>
    <Toggle label="Auto Size" indent />
    <Row $gap={5}>
      <Label as="span">Vertex Color</Label>
      <ColorField aria-label="Vertex Color" />
    </Row>
    <Toggle label="Color Gradient" />
    <Toggle label="Override Tags" />
    <Row $gap={5}>
      <Label as="span">Spacing Options (em)</Label>
      <SpacingGrid>
        <Spaced htmlFor="char">Character</Spaced>
        <TextField id="char" defaultValue="0" />
        <Spaced htmlFor="word" $inset>Word</Spaced>
        <TextField id="word" defaultValue="0" />
      </SpacingGrid>
    </Row>
    <Row>
      <span />
      <SpacingGrid>
        <Spaced htmlFor="line">Line</Spaced>
        <TextField id="line" defaultValue="0" />
        <Spaced htmlFor="para" $inset>Paragraph</Spaced>
        <TextField id="para" defaultValue="0" />
      </SpacingGrid>
    </Row>
    <Row $gap={5}>
      <Label as="span">Alignment</Label>
      <AlignGroups>
        <AlignGroup names={['left', 'center', 'right', 'justified', 'flush', 'geometry']} />
        <AlignGroup names={['top', 'middle', 'bottom', 'baseline', 'midline', 'capline']} />
      </AlignGroups>
    </Row>
    <Choice label="Wrapping" value="Enabled" gap={5} />
    <Choice label="Overflow" value="Overflow" />
    <Choice label="Horizontal Mapping" value="Character" gap={5} />
    <Choice label="Vertical Mapping" value="Character" />
    <BarTitle $margin="7px 0 0 5px">
      <strong>Extra Settings</strong>
      <em>(Click to expand)</em>
    </BarTitle>
  </SectionBody>
);

const Inspector = () => (
  <Panel>
    <Tabs
      items={[
        { label: 'Inspector', icon: <InfoIcon />, active: true },
        { label: 'Lighting', icon: <Bulb /> },
        { label: 'Navigation', icon: <NavIcon /> },
        { label: 'Services' },
        { label: 'Project Settings', icon: <Gear size={7} /> },
        { label: 'Asset Store', icon: <BagIcon /> },
      ]}
      lock
      roomy
    />
    <ObjectHeader>
      <ObjectIcon><Cube size={15} /><Down /></ObjectIcon>
      <div>
        <ObjectRow $indent={3} $gap={4}>
          <Check aria-label="Active" defaultChecked />
          <TextField aria-label="Name" defaultValue="Text (TMP)" $bold />
          <StaticToggle>
            <Check id="static" />
            <label htmlFor="static">Static</label>
            <Down />
          </StaticToggle>
        </ObjectRow>
        <ObjectRow>
          <label htmlFor="tag">Tag</label>
          <Select id="tag" value="Untagged" />
          <Gap />
          <label htmlFor="layer">Layer</label>
          <Select id="layer" value="UI" />
        </ObjectRow>
      </div>
    </ObjectHeader>
    <Section icon={<RectIcon />} title="Rect Transform" />
    <RectTransform />
    <Section icon={<RendererIcon />} title="Canvas Renderer" />
    <SectionBody $pad="1px 0 4px">
      <Toggle label="Cull Transparent Mesh" />
    </SectionBody>
    <Section icon={<AssetBadge>T</AssetBadge>} title="TextMeshPro - Text (UI)" checked marked />
    <TextMeshPro />
    <MaterialHeader>
      <MaterialPreview><SphereIcon /><Fold open /></MaterialPreview>
      <div>
        <MaterialRow $title>
          LiberationSans SDF Material
          <HeaderTools $gap={3}><HelpIcon /><PresetIcon /><Gear size={7} /></HeaderTools>
        </MaterialRow>
        <MaterialRow>
          <label htmlFor="shader">Shader</label>
          <Select id="shader" value="TextMeshPro/Mobile/Distance Field" />
        </MaterialRow>
      </div>
    </MaterialHeader>
    <FaceBox>
      <FaceRow>
        <strong>Face</strong>
        <em>- Click to collapse -</em>
      </FaceRow>
      <FaceColor>
        <span>Color</span>
        <HdrButton>HDR</HdrButton>
      </FaceColor>
    </FaceBox>
  </Panel>
);

export default function App() {
  return (
    <React.Fragment>
      <GlobalStyle />
      <Shell>
        <Column $rows="463fr 209fr">
          <Hierarchy />
          <Project />
        </Column>
        <Column $rows="309fr 363fr">
          <Game />
          <Scene />
        </Column>
        <Inspector />
      </Shell>
    </React.Fragment>
  );
}
